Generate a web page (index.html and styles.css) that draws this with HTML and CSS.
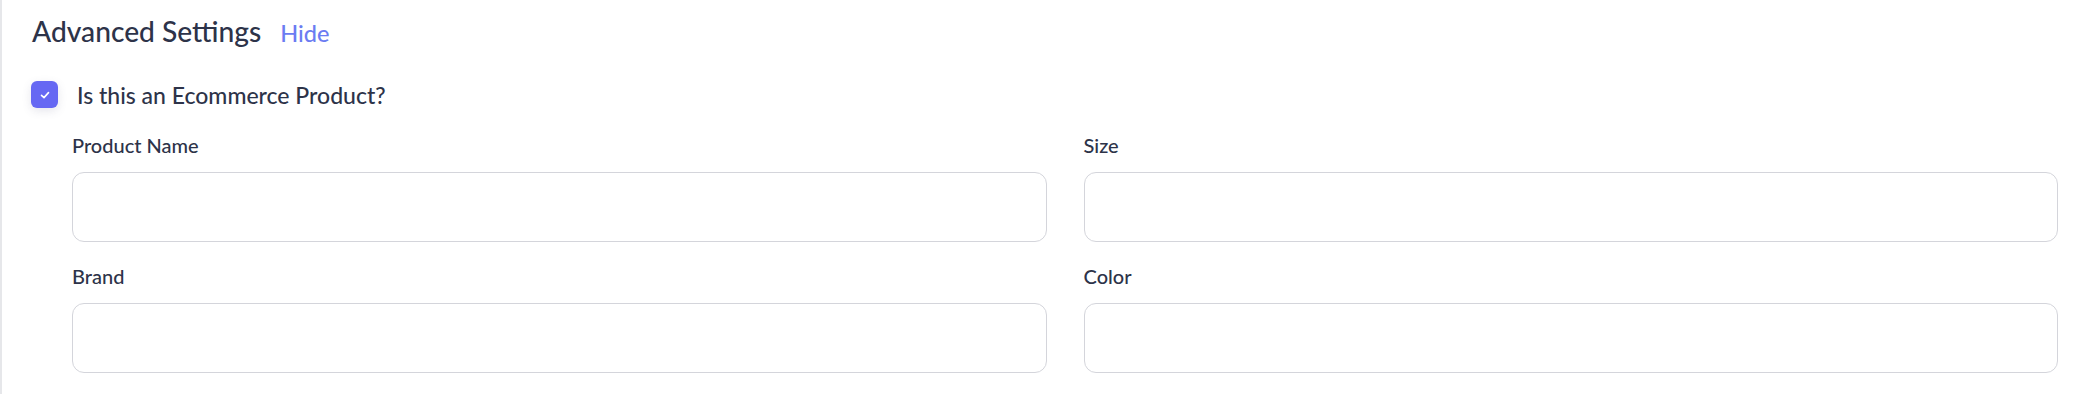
FILE: index.html
```html
<!DOCTYPE html>
<html lang="en">
<head>
<meta charset="utf-8">
<title>Advanced Settings</title>
<link rel="stylesheet" href="styles.css">
</head>
<body>
<section class="panel">
  <div class="header">
    <h2 class="title">Advanced Settings</h2>
    <a class="toggle" href="#">Hide</a>
  </div>
  <label class="check-row">
    <span class="checkbox">
      <svg width="12" height="12" viewBox="0 0 12 12"><polyline points="2.5,6.3 5,8.6 9.5,3.6" fill="none" stroke="#fff" stroke-width="1.6" stroke-linecap="round" stroke-linejoin="round"/></svg>
    </span>
    <span class="check-label">Is this an Ecommerce Product?</span>
  </label>
  <div class="fields">
    <div class="field">
      <label class="field-label">Product Name</label>
      <input class="field-input" type="text">
    </div>
    <div class="field">
      <label class="field-label">Size</label>
      <input class="field-input" type="text">
    </div>
    <div class="field">
      <label class="field-label">Brand</label>
      <input class="field-input" type="text">
    </div>
    <div class="field">
      <label class="field-label">Color</label>
      <input class="field-input" type="text">
    </div>
  </div>
</section>
</body>
</html>
```
FILE: styles.css
```css
* { box-sizing: border-box; }
html, body { margin: 0; padding: 0; background: #ffffff; }
body {
  font-family: "Lato", "Noto Sans", sans-serif;
  font-weight: 500;
  color: #2d3349;
}
.panel {
  height: 394px;
  border-left: 2px solid #e6e7ea;
  padding: 13px 28px 0 30px;
}
.header {
  display: flex;
  align-items: baseline;
  gap: 19px;
}
.title {
  margin: 0;
  font-size: 28.2px;
  line-height: 36px;
  font-weight: 500;
  color: #2d3349;
}
.toggle {
  font-size: 23.5px;
  color: #6b7cf2;
  text-decoration: none;
}
.check-row {
  display: flex;
  align-items: center;
  gap: 19px;
  margin-top: 32px;
  margin-left: -1px;
}
.checkbox {
  width: 27px;
  height: 27px;
  border-radius: 6px;
  background: #6668f3;
  display: flex;
  align-items: center;
  justify-content: center;
  box-shadow: 0 3px 10px rgba(80, 80, 120, 0.14);
}
.check-label {
  font-size: 23px;
  line-height: 26px;
  color: #2d3349;
}
.fields {
  margin-top: 24px;
  margin-left: 40px;
  display: grid;
  grid-template-columns: 1fr 1fr;
  column-gap: 37px;
  row-gap: 21px;
}
.field {
  display: flex;
  flex-direction: column;
}
.field-label {
  font-size: 20px;
  line-height: 26px;
  margin-bottom: 14px;
  color: #2d3349;
}
.field-input {
  height: 70px;
  border: 1.5px solid #d4d5db;
  border-radius: 12px;
  background: #fff;
  font: inherit;
  padding: 0 16px;
  outline: none;
}
```
